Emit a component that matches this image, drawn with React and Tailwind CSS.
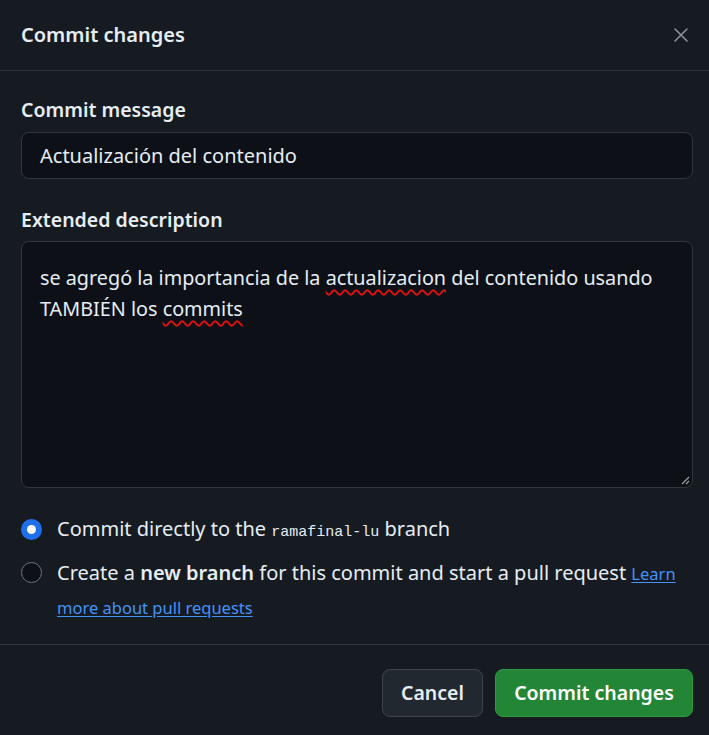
import React from "react";

const FONT = "font-['Segoe_UI','Noto_Sans',sans-serif]";

function Radio({ checked }) {
  if (checked) {
    return (
      <span className="flex h-[21px] w-[21px] shrink-0 items-center justify-center rounded-full bg-[#1f6feb]">
        <span className="h-[9px] w-[9px] rounded-full bg-white" />
      </span>
    );
  }
  return <span className="block h-[21px] w-[21px] shrink-0 rounded-full border border-[#6e7681] bg-[#0d1117]" />;
}

export default function App() {
  return (
    <div className={`${FONT} flex h-[735px] w-[709px] flex-col bg-[#161b22] text-[#e6edf3]`}>
      <div className="flex h-[71px] shrink-0 items-center justify-between border-b border-[#30363d] pl-[21px] pr-[20px]">
        <h1 className="text-[20px] font-semibold">Commit changes</h1>
        <svg width="16" height="16" viewBox="0 0 16 16" className="text-[#8d96a0]">
          <path d="M2 2 L14 14 M14 2 L2 14" stroke="currentColor" strokeWidth="1.5" strokeLinecap="round" />
        </svg>
      </div>

      <div className="flex flex-1 flex-col pl-[21px] pr-[16px] pt-[27px]">
        <label className="text-[19.5px] font-semibold leading-[24px]">Commit message</label>
        <div className="mt-[10px] flex h-[47px] items-center rounded-[8px] border border-[#30363d] bg-[#0d1117] px-[18px] text-[20px]">
          Actualización del contenido
        </div>

        <label className="mt-[29px] text-[19.5px] font-semibold leading-[24px]">Extended description</label>
        <div className="relative mt-[9px] h-[247px] rounded-[8px] border border-[#30363d] bg-[#0d1117] px-[18px] pt-[20px] text-[19.8px] leading-[31px]">
          <p>
            se agregó la importancia de la{" "}
            <span className="underline decoration-wavy decoration-[#e01010] decoration-[1.5px] underline-offset-[4px]">actualizacion</span>{" "}
            del contenido usando TAMBIÉN los{" "}
            <span className="underline decoration-wavy decoration-[#e01010] decoration-[1.5px] underline-offset-[4px]">commits</span>
          </p>
          <svg width="10" height="10" viewBox="0 0 10 10" className="absolute bottom-[2px] right-[2px] text-[#a0a0a0]">
            <path d="M9 2 L2 9 M9 6 L6 9" stroke="currentColor" strokeWidth="1.2" />
          </svg>
        </div>

        <div className="mt-[29px] flex h-[24px] items-center gap-[15px] text-[20px]">
          <Radio checked />
          <span>
            Commit directly to the <code className="font-['Liberation_Mono',monospace] text-[15px]">ramafinal-lu</code> branch
          </span>
        </div>
        <div className="mt-[15px] flex items-start gap-[15px] text-[20px] leading-[33px]">
          <span className="mt-[6px] block">
            <Radio />
          </span>
          <span>
            Create a <b className="font-semibold">new branch</b> for this commit and start a pull request{" "}
            <a className="text-[16.5px] text-[#4493f8] underline underline-offset-2">Learn more about pull requests</a>
          </span>
        </div>
      </div>

      <div className="flex h-[91px] shrink-0 items-start justify-end gap-[12px] border-t border-[#30363d] px-[16px] pt-[24px]">
        <button className={`${FONT} h-[48px] w-[101px] rounded-[8px] border border-[#3d444d] bg-[#212830] text-[19.5px] font-semibold`}>
          Cancel
        </button>
        <button className={`${FONT} h-[48px] w-[198px] rounded-[8px] border border-[#2e9a40] bg-[#238636] text-[19.5px] font-semibold text-white`}>
          Commit changes
        </button>
      </div>
    </div>
  );
}
